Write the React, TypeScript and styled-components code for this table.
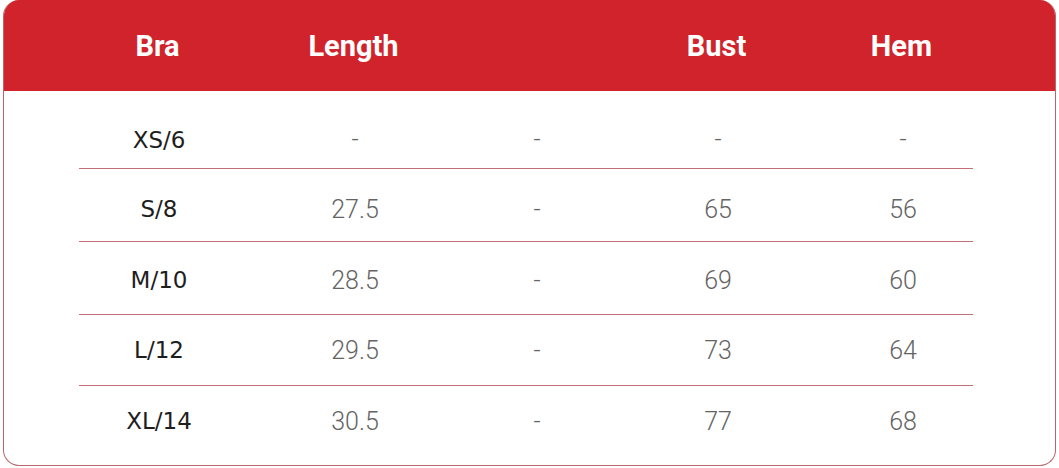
import styled, { createGlobalStyle } from "styled-components";

const GlobalStyle = createGlobalStyle`
  html, body {
    margin: 0;
    padding: 0;
    background: #ffffff;
  }
`;

const COLS = "160px 232px 132px 230px 140px";

const Card = styled.div`
  box-sizing: border-box;
  margin: 0 3px;
  width: 1053px;
  height: 466px;
  border: 1.5px solid #b9656c;
  border-top: none;
  border-radius: 16px;
  overflow: hidden;
  background: #fff;
`;

const Header = styled.div`
  display: grid;
  grid-template-columns: ${COLS};
  align-items: center;
  height: 91px;
  padding-left: 75px;
  margin: 0 -1.5px;
  background: #d0232b;
  padding-top: 1px;
  box-sizing: border-box;
`;

const HeadCell = styled.div`
  text-align: center;
  color: #fff;
  font-family: Roboto, "Liberation Sans", sans-serif;
  font-weight: 700;
  font-size: 29px;
`;

const Body = styled.div`
  display: flex;
  flex-direction: column;
  padding-left: 75px;
`;

const Row = styled.div<{ $h: number; $pad: number; $last?: boolean }>`
  display: grid;
  grid-template-columns: ${COLS};
  align-items: center;
  width: 894px;
  height: ${(p) => p.$h}px;
  padding-top: ${(p) => p.$pad}px;
  border-bottom: ${(p) => (p.$last ? "none" : "1px solid #c26f78")};
  box-sizing: border-box;
`;

const SizeCell = styled.div`
  text-align: center;
  color: #1e1e1e;
  font-family: "DejaVu Sans", "Noto Sans", sans-serif;
  font-size: 23px;
`;

const ValueCell = styled.div`
  text-align: center;
  color: #646464;
  font-family: Roboto, "Noto Sans", sans-serif;
  font-weight: 300;
  font-size: 25px;
`;

const rows = [
  { size: "XS/6", vals: ["-", "-", "-", "-"], h: 78, pad: 20 },
  { size: "S/8", vals: ["27.5", "-", "65", "56"], h: 73, pad: 8 },
  { size: "M/10", vals: ["28.5", "-", "69", "60"], h: 73, pad: 4 },
  { size: "L/12", vals: ["29.5", "-", "73", "64"], h: 71, pad: 0 },
  { size: "XL/14", vals: ["30.5", "-", "77", "68"], h: 70, pad: 0 },
];

export default function App() {
  return (
    <>
      <GlobalStyle />
      <Card>
        <Header>
          <HeadCell>Bra</HeadCell>
          <HeadCell>Length</HeadCell>
          <HeadCell />
          <HeadCell>Bust</HeadCell>
          <HeadCell>Hem</HeadCell>
        </Header>
        <Body>
          {rows.map((r, i) => (
            <Row key={r.size} $h={r.h} $pad={r.pad} $last={i === rows.length - 1}>
              <SizeCell>{r.size}</SizeCell>
              {r.vals.map((v, j) => (
                <ValueCell key={j}>{v}</ValueCell>
              ))}
            </Row>
          ))}
        </Body>
      </Card>
    </>
  );
}
